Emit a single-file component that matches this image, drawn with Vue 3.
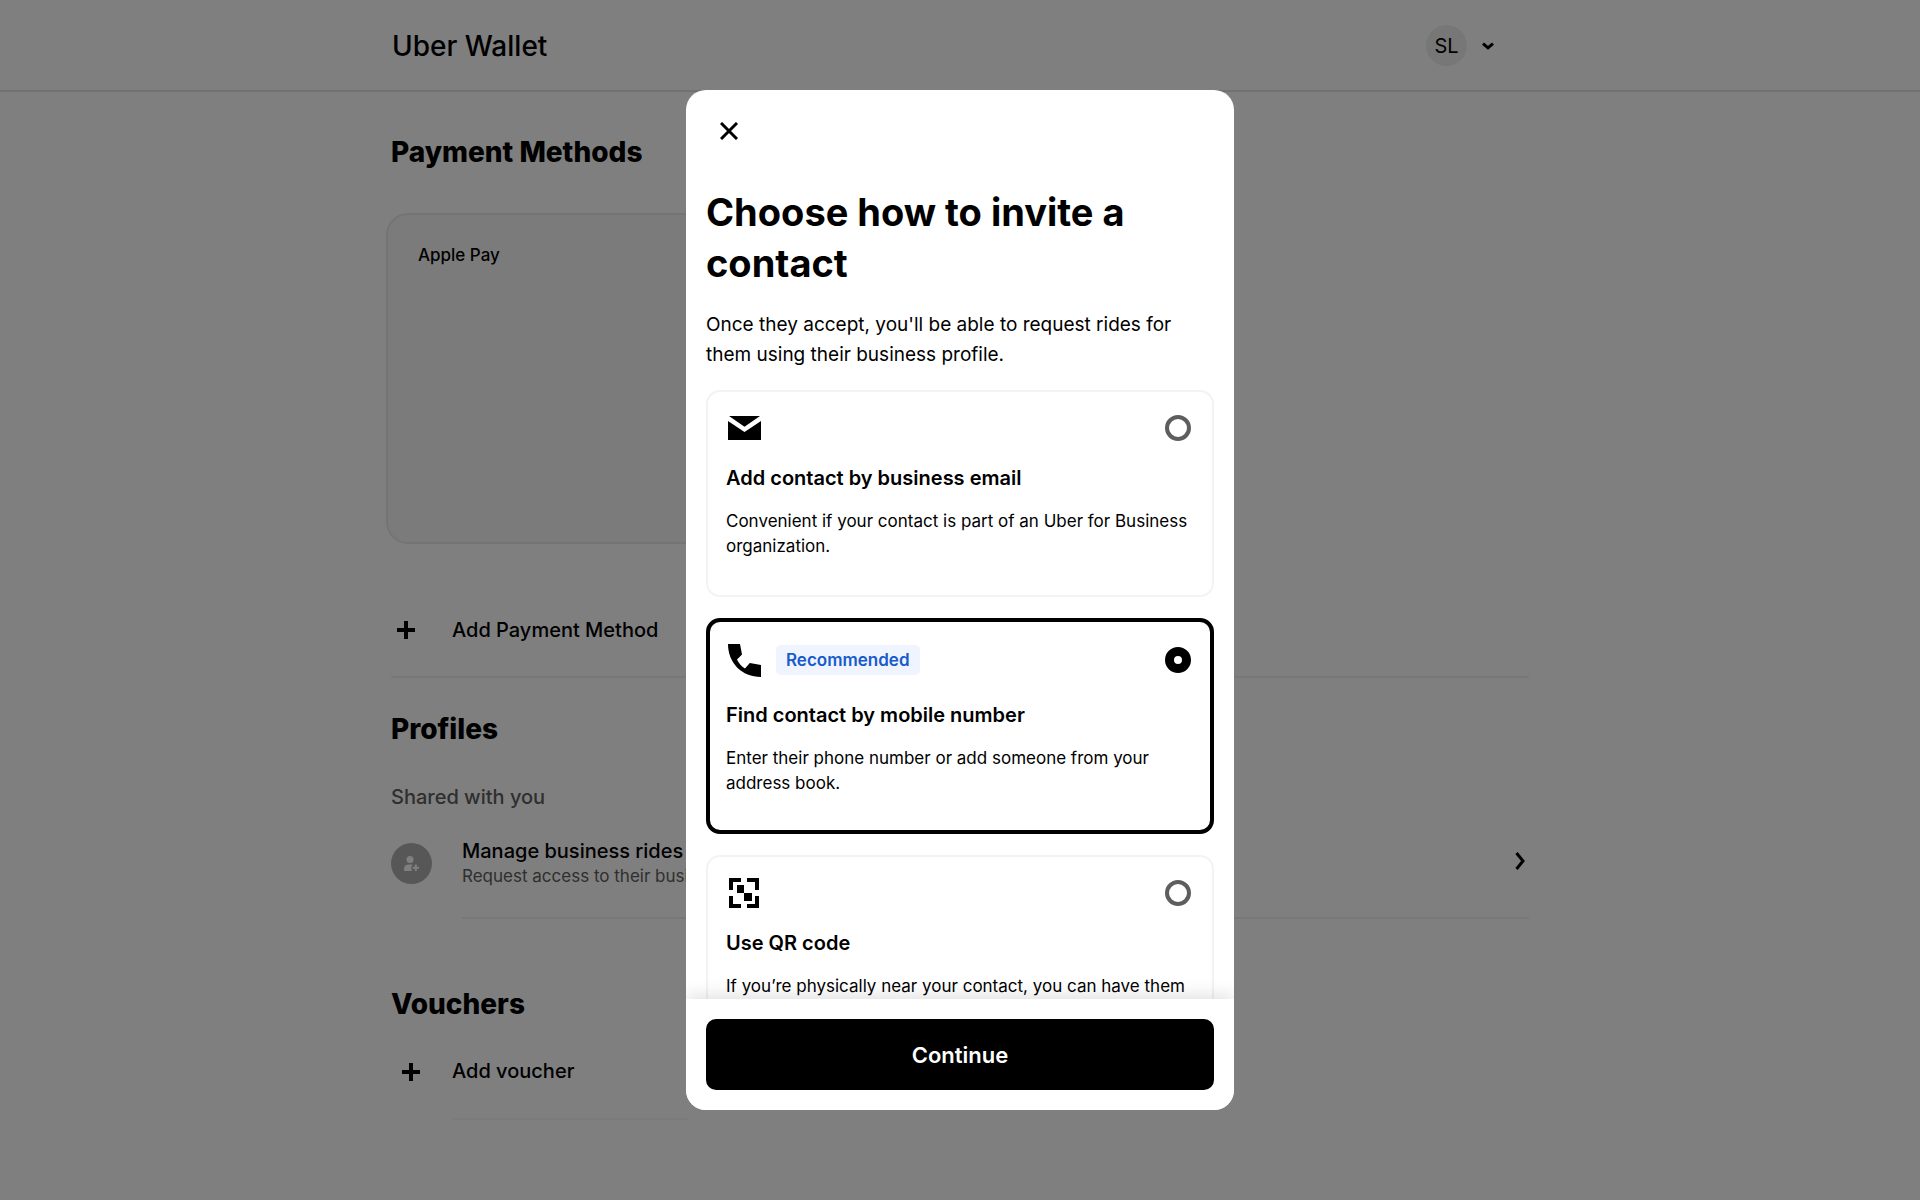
<template>
  <div class="wallet">
    <header class="header">
      <div class="header-inner">
        <span class="brand">Uber Wallet</span>
        <button class="account" type="button" aria-label="Account menu">
          <span class="initials">SL</span>
          <svg class="icon-down" viewBox="0 0 12 8"><path d="M1 1.6 6 5.800l5-4.200" /></svg>
        </button>
      </div>
    </header>

    <main class="content">
      <h2>Payment Methods</h2>
      <div class="pay-card">Apple Pay</div>
      <button class="add-row" type="button">
        <svg class="icon-plus" viewBox="0 0 18 18"><path d="M7 0h4v7h7v4h-7v7H7v-7H0V7h7z" /></svg>
        Add Payment Method
      </button>

      <h2 class="profiles-title">Profiles</h2>
      <p class="shared">Shared with you</p>
      <a class="profile" href="#">
        <span class="profile-avatar">
          <svg class="icon-person" viewBox="0 0 16 16">
            <circle cx="6" cy="3.5" r="3.500" />
            <path d="M0 15v-2c0-3 2-4.500 4.500-4.500H8.500L7 11.500 8 15z" />
            <path d="M10.800 8.600h2v2.200H15v2h-2.200V15h-2v-2.200H8.600v-2h2.200z" />
          </svg>
        </span>
        <span class="profile-body">
          <span class="profile-text">
            <strong>Manage business rides for others</strong>
            <span>Request access to their business profile</span>
          </span>
          <svg class="icon-right" viewBox="0 0 10 18"><path d="M1.500 1 8 9l-6.500 8" /></svg>
        </span>
      </a>

      <h2 class="vouchers-title">Vouchers</h2>
      <button class="add-row voucher" type="button">
        <svg class="icon-plus" viewBox="0 0 18 18"><path d="M7 0h4v7h7v4h-7v7H7v-7H0V7h7z" /></svg>
        <span class="voucher-label">Add voucher</span>
      </button>
    </main>

    <div class="overlay">
      <section class="modal" role="dialog" aria-modal="true" aria-labelledby="invite-title">
        <div class="modal-body">
          <button class="close" type="button" aria-label="Close">
            <svg viewBox="0 0 18 18"><path d="m1 1 16 16M17 1 1 17" /></svg>
          </button>
          <h1 id="invite-title">Choose how to invite a contact</h1>
          <p class="intro">Once they accept, you'll be able to request rides for them using their business profile.</p>

          <label
            v-for="option in options"
            :key="option.id"
            :class="['option', { selected: selected === option.id }]"
          >
            <span class="option-top">
              <svg v-if="option.id === 'email'" class="icon-email" viewBox="0 0 33 24">
                <path d="M1 0h31L16.500 10.800zM0 5l16.500 11L33 5v19H0z" />
              </svg>
              <svg v-else-if="option.id === 'phone'" class="icon-phone" viewBox="0 0 33 33">
                <path d="M0 0h12l2 10.500-5 5c1.500 3.600 4.400 6.800 8 9l4.800-5.500L33 21v12C14 33 0 19 0 0z" />
              </svg>
              <svg v-else class="icon-qr" viewBox="0 0 32 30">
                <path d="M1 0h12v4H5v8H1zM19 0h12v12h-4V4h-8zM1 18h4v8h8v4H1zM27 18h4v12H19v-4h8zM9 7h7v8H9zM16 15h8v8h-8z" />
              </svg>
              <span v-if="option.badge" class="badge">{{ option.badge }}</span>
              <input v-model="selected" type="radio" name="invite" :value="option.id" />
            </span>
            <span class="option-title">{{ option.title }}</span>
            <span class="option-text">{{ option.text }}</span>
          </label>
        </div>
        <footer class="modal-footer">
          <button class="continue" type="button">Continue</button>
        </footer>
      </section>
    </div>
  </div>
</template>

<script setup>
import { ref } from 'vue'

const selected = ref('phone')

const options = [
  {
    id: 'email',
    title: 'Add contact by business email',
    text: 'Convenient if your contact is part of an Uber for Business organization.'
  },
  {
    id: 'phone',
    badge: 'Recommended',
    title: 'Find contact by mobile number',
    text: 'Enter their phone number or add someone from your address book.'
  },
  {
    id: 'qr',
    title: 'Use QR code',
    text: 'If you’re physically near your contact, you can have them scan your code.'
  }
]
</script>

<style>
body {
  background: #fff;
  overflow: hidden;
}
</style>

<style scoped>
.wallet,
.wallet * {
  box-sizing: border-box;
}

.wallet {
  min-height: 100vh;
  font-family: Inter, "Liberation Sans", sans-serif;
  color: #000;
}

button {
  font: inherit;
  color: inherit;
  background: none;
  border: 0;
  padding: 0;
  cursor: pointer;
}

h1,
h2,
p {
  margin: 0;
}

svg {
  display: block;
  flex: none;
}

.header {
  border-bottom: 2px solid #e2e2e2;
}

.header-inner {
  max-width: 1138px;
  height: 90px;
  margin: 0 auto;
  padding: 1px 35px 0 1px;
  display: flex;
  align-items: center;
  justify-content: space-between;
}

.brand {
  font-size: 28px;
  font-weight: 500;
}

.account {
  display: flex;
  align-items: center;
  gap: 15px;
}

.initials {
  width: 41px;
  height: 41px;
  display: flex;
  align-items: center;
  justify-content: center;
  border-radius: 50%;
  background: #eee;
  font-size: 20px;
}

.icon-down {
  width: 12px;
  height: 8px;
}

.icon-down path,
.icon-right path,
.close path {
  fill: none;
  stroke: #000;
  stroke-width: 3;
}

.content {
  max-width: 1138px;
  margin: 0 auto;
  padding-top: 40px;
}

h2 {
  font-size: 28px;
  line-height: 40px;
  font-weight: 800;
}

.pay-card {
  width: 560px;
  height: 331px;
  margin: 41px 0 40px -5px;
  padding: 28px 30px;
  border: 2px solid #e8e8e8;
  border-radius: 22px;
  background: #f6f6f6;
  font-size: 17px;
  line-height: 25px;
  font-weight: 500;
}

.add-row {
  width: 100%;
  height: 94px;
  padding-left: 6px;
  display: flex;
  align-items: center;
  gap: 37px;
  border-bottom: 2px solid #f0f0f0;
  font-size: 20px;
  font-weight: 500;
  text-align: left;
}

.icon-plus {
  width: 18px;
  height: 18px;
}

.profiles-title {
  margin-top: 31px;
}

.shared {
  margin-top: 35px;
  font-size: 20px;
  line-height: 26px;
  font-weight: 500;
  color: #5e5e5e;
}

.profile {
  margin-top: 28px;
  display: flex;
  gap: 30px;
  color: inherit;
  text-decoration: none;
}

.profile-avatar {
  width: 41px;
  height: 41px;
  margin-top: 5px;
  display: flex;
  align-items: center;
  justify-content: center;
  border-radius: 50%;
  background: #afafaf;
}

.icon-person {
  width: 16px;
  height: 16px;
  fill: #fff;
}

.profile-body {
  flex: 1;
  padding-right: 4px;
  display: flex;
  align-items: flex-start;
  justify-content: space-between;
  border-bottom: 2px solid #f0f0f0;
}

.profile-text {
  padding-bottom: 28px;
  display: flex;
  flex-direction: column;
  font-size: 17px;
  line-height: 25px;
  color: #5e5e5e;
}

.profile-text strong {
  font-size: 20px;
  line-height: 26px;
  font-weight: 500;
  color: #000;
}

.icon-right {
  width: 10px;
  height: 18px;
  margin-top: 14px;
}

.vouchers-title {
  margin-top: 65px;
}

.voucher {
  width: auto;
  height: 96px;
  padding-left: 11px;
  gap: 32px;
  border: 0;
}

.voucher-label {
  width: 236px;
  line-height: 94px;
  border-bottom: 2px solid #f6f6f6;
}

.overlay {
  position: fixed;
  inset: 0;
  display: flex;
  align-items: center;
  justify-content: center;
  background: rgba(0, 0, 0, 0.5);
}

.modal {
  width: 548px;
  max-height: 85vh;
  display: flex;
  flex-direction: column;
  border-radius: 20px;
  background: #fff;
  overflow: hidden;
}

.modal-body {
  padding: 20px;
  overflow-y: auto;
  scrollbar-width: none;
}

.close {
  width: 46px;
  height: 42px;
  display: flex;
  align-items: center;
  justify-content: center;
}

.close svg {
  width: 18px;
  height: 18px;
}

h1 {
  margin-top: 35px;
  font-size: 38px;
  line-height: 51px;
  font-weight: 700;
}

.intro {
  margin: 21px 0 20px;
  font-size: 19px;
  line-height: 30px;
}

.option {
  margin-bottom: 21px;
  padding: 18px 18px 36px;
  display: flex;
  flex-direction: column;
  border: 2px solid #f3f3f3;
  border-radius: 14px;
  cursor: pointer;
}

.option.selected {
  padding: 16px 16px 34px;
  border: 4px solid #000;
}

.option-top {
  min-height: 35px;
  padding: 0 3px 0 2px;
  display: flex;
  align-items: center;
}

.icon-email {
  width: 33px;
  height: 24px;
}

.icon-phone {
  width: 33px;
  height: 33px;
}

.icon-qr {
  width: 32px;
  height: 30px;
}

.badge {
  margin: 7px 0 7px 15px;
  padding: 0 10px;
  border-radius: 5px;
  background: #eff4fe;
  color: #175bcc;
  font-size: 17px;
  line-height: 30px;
  font-weight: 600;
}

.option input {
  appearance: none;
  width: 26px;
  height: 26px;
  margin: 0 0 0 auto;
  border: 4px solid #5e5e5e;
  border-radius: 50%;
  background: #fff;
}

.option input:checked {
  border: 9px solid #000;
}

.option-title {
  margin-top: 20px;
  font-size: 20px;
  line-height: 26px;
  font-weight: 600;
}

.option-text {
  margin-top: 18px;
  font-size: 17px;
  line-height: 25px;
}

.modal-footer {
  position: relative;
  padding: 20px;
  background: #fff;
  box-shadow: 0 -4px 16px rgba(0, 0, 0, 0.12);
}

.continue {
  display: block;
  width: 100%;
  height: 71px;
  border-radius: 10px;
  background: #000;
  color: #fff;
  font-size: 22px;
  font-weight: 600;
}
</style>
